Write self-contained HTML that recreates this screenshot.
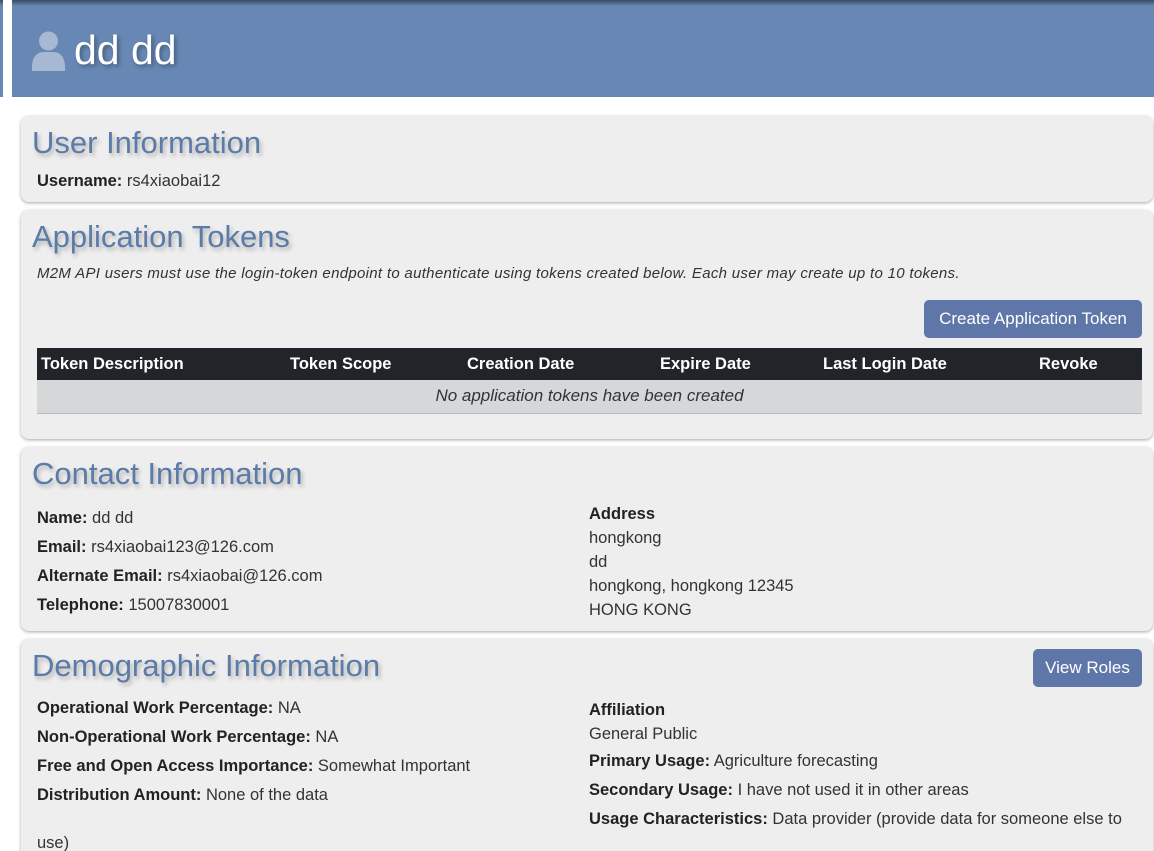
<!DOCTYPE html>
<html><head><meta charset="utf-8"><style>
*{box-sizing:border-box}
html,body{margin:0;width:1154px;height:851px;overflow:hidden}
body{position:relative;background:#fff;font-family:"Liberation Sans",sans-serif;font-size:16.5px;color:#333}
.hdr{position:absolute;left:0;top:0;width:1154px;height:97px;background:#6788b5}
.hdr .top{position:absolute;left:0;top:0;width:100%;height:6px;background:linear-gradient(#3a4a63,#6788b5)}
.hdr .strip{position:absolute;left:3px;top:0;width:9px;height:97px;background:#fff}
.hdr .t{position:absolute;left:74px;top:27px;font-size:41px;color:#fff;text-shadow:2px 2px 4px rgba(0,0,0,.35)}
.p{position:absolute;left:21px;width:1132px;background:#eee;border-radius:8px;box-shadow:0 1px 3px rgba(0,0,0,.35)}
h2{position:absolute;left:11px;margin:0;font-weight:normal;font-size:31px;color:#5b7ba8;text-shadow:2px 3px 4px rgba(0,0,0,.25)}
.r{position:absolute;white-space:nowrap}
b{color:#222}
.btn{position:absolute;background:#5f77a8;color:#fff;border-radius:5px;font-size:17px;text-align:center}
table{position:absolute;left:16px;top:138px;width:1105px;border-collapse:collapse}
th{background:#212529;color:#fff;text-align:left;height:32px;padding:0 4px;font-size:16.5px}
td{background:#d6d7d9;height:33px;text-align:center;font-style:italic;border-bottom:1px solid #bbb;font-size:17px}
</style></head><body>
<div class="hdr"><div class="top"></div><div class="strip"></div>
<svg style="position:absolute;left:31px;top:31px" width="35" height="40" viewBox="0 0 35 40"><circle cx="17.5" cy="10" r="9.5" fill="#a7b8d3"/><path d="M1 40 Q0 22 12 21 L23 21 Q35 22 34 40Z" fill="#a7b8d3"/></svg>
<div class="t">dd dd</div></div>

<div class="p" style="top:116px;height:86px"><h2 style="top:9px">User Information</h2>
<div class="r" style="left:16px;top:56px"><b>Username:</b> rs4xiaobai12</div></div>

<div class="p" style="top:210px;height:229px"><h2 style="top:9px">Application Tokens</h2>
<div class="r" style="left:16px;top:55px;font-size:15px;letter-spacing:0.3px;font-style:italic">M2M API users must use the login-token endpoint to authenticate using tokens created below. Each user may create up to 10 tokens.</div>
<div class="btn" style="left:903px;top:90px;width:218px;height:38px;line-height:38px">Create Application Token</div>
<table><tr><th style="width:249px">Token Description</th><th style="width:177px">Token Scope</th><th style="width:193px">Creation Date</th><th style="width:163px">Expire Date</th><th style="width:216px">Last Login Date</th><th>Revoke</th></tr>
<tr><td colspan="6">No application tokens have been created</td></tr></table></div>

<div class="p" style="top:447px;height:184px"><h2 style="top:9px">Contact Information</h2>
<div class="r" style="left:16px;top:62px"><b>Name:</b> dd dd</div>
<div class="r" style="left:16px;top:91px"><b>Email:</b> rs4xiaobai123@126.com</div>
<div class="r" style="left:16px;top:120px"><b>Alternate Email:</b> rs4xiaobai@126.com</div>
<div class="r" style="left:16px;top:149px"><b>Telephone:</b> 15007830001</div>
<div class="r" style="left:568px;top:55px;line-height:24px"><b>Address</b><br>hongkong<br>dd<br>hongkong, hongkong 12345<br>HONG KONG</div></div>

<div class="p" style="top:639px;height:230px"><h2 style="top:9px">Demographic Information</h2>
<div class="btn" style="left:1012px;top:10px;width:109px;height:38px;line-height:38px">View Roles</div>
<div class="r" style="left:16px;top:60px"><b>Operational Work Percentage:</b> NA</div>
<div class="r" style="left:16px;top:89px"><b>Non-Operational Work Percentage:</b> NA</div>
<div class="r" style="left:16px;top:118px"><b>Free and Open Access Importance:</b> Somewhat Important</div>
<div class="r" style="left:16px;top:147px"><b>Distribution Amount:</b> None of the data</div>
<div class="r" style="left:16px;top:195px">use)</div>
<div class="r" style="left:568px;top:59px;line-height:24px"><b>Affiliation</b><br>General Public</div>
<div class="r" style="left:568px;top:113px"><b>Primary Usage:</b> Agriculture forecasting</div>
<div class="r" style="left:568px;top:142px"><b>Secondary Usage:</b> I have not used it in other areas</div>
<div class="r" style="left:568px;top:171px"><b>Usage Characteristics:</b> Data provider (provide data for someone else to</div>
</div>
</body></html>
